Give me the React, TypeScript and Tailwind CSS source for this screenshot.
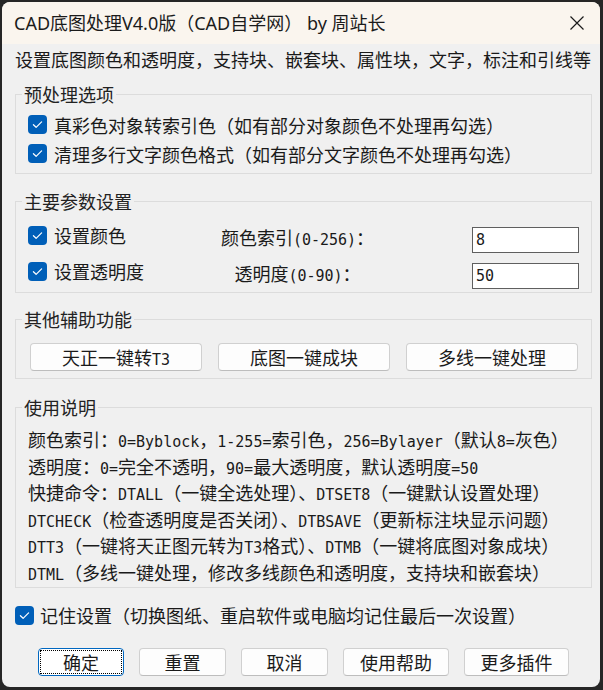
import React from "react";

function T({ s }: { s: string }) {
  const parts = s.split(/([\x20-\x7e]+)/);
  return (
    <>
      {parts.map((p, i) =>
        /^[\x20-\x7e]+$/.test(p) ? (
          <span key={i} className="font-['DejaVu_Sans_Mono',monospace] text-[15px] leading-none">
            {p}
          </span>
        ) : (
          <React.Fragment key={i}>{p}</React.Fragment>
        )
      )}
    </>
  );
}

function Check() {
  return (
    <span className="flex h-[19px] w-[19px] shrink-0 items-center justify-center rounded-[4px] bg-[#005fb8]">
      <svg width="19" height="19" viewBox="0 0 19 19">
        <path
          d="M5.4 9.7 L8.1 12.3 L13.6 6.8"
          fill="none"
          stroke="white"
          strokeWidth="1.2"
          strokeLinecap="round"
          strokeLinejoin="round"
        />
      </svg>
    </span>
  );
}

function Btn({ children, w }: { children: React.ReactNode; w: string }) {
  return (
    <button
      className={`flex h-[28px] items-center justify-center rounded-[4px] border border-[#d0d0d0] border-b-[#bdbdbd] bg-[#fdfdfd] text-[18px] text-[#1a1a1a] ${w}`}
    >
      <span className="block h-[24px] leading-[24px]">{children}</span>
    </button>
  );
}

function Line({ s }: { s: string }) {
  return (
    <div className="h-[26.6px] overflow-visible whitespace-nowrap leading-[26.6px]">
      <T s={s} />
    </div>
  );
}

export default function App() {
  return (
    <div className="h-[690px] w-[603px] bg-[#262626] pb-[3px] pl-[2px] pr-[3px] pt-[2px] font-['Noto_Sans_CJK_SC',sans-serif] text-[18px] text-[#1a1a1a]">
      <div className="flex h-full flex-col overflow-hidden rounded-[8px] bg-[#f0f0f0]">
        <div className="flex h-[42px] shrink-0 items-center justify-between bg-[#faf5ee] pl-[12px] pr-[15px]">
          <span className="font-['Noto_Sans','Noto_Sans_CJK_SC',sans-serif] text-[18px] leading-[24px] text-[#1b1b1b]">
            CAD底图处理V4.0版（CAD自学网） by 周站长
          </span>
          <svg width="16" height="16" viewBox="0 0 16 16">
            <path d="M1.5 1.5 L14.5 14.5 M14.5 1.5 L1.5 14.5" stroke="#1b1b1b" strokeWidth="1.2" fill="none" />
          </svg>
        </div>

        <div className="flex flex-col pl-[13px] pr-[8px]">
          <div className="h-[32px] leading-[30px]">
            设置底图颜色和透明度，支持块、嵌套块、属性块，文字，标注和引线等
          </div>

          {/* 预处理选项 */}
          <fieldset className="mt-[8px] min-w-0 border border-[#dcdcdc] pb-[5px] pt-[6px]">
            <legend className="ml-[6px] px-[2px] leading-[20px] text-[#222]">预处理选项</legend>
            <div className="flex h-[29px] items-center gap-[7px] pl-[12px]">
              <Check />
              <span className="leading-[20px]">真彩色对象转索引色（如有部分对象颜色不处理再勾选）</span>
            </div>
            <div className="flex h-[29px] items-center gap-[7px] pl-[12px]">
              <Check />
              <span className="leading-[20px]">清理多行文字颜色格式（如有部分文字颜色不处理再勾选）</span>
            </div>
          </fieldset>

          {/* 主要参数设置 */}
          <fieldset className="mt-[17px] flex min-w-0 flex-col gap-[10px] border border-[#dcdcdc] pb-[3px] pl-[12px] pr-[12px] pt-[16px]">
            <legend className="ml-[-6px] px-[2px] leading-[20px] text-[#222]">主要参数设置</legend>
            <div className="flex h-[26px] items-start">
              <div className="mt-[-1px] flex h-[19px] w-[172px] items-center gap-[7px]">
                <Check />
                <span className="leading-[19px]">设置颜色</span>
              </div>
              <div className="h-[20px] w-[195px] text-center leading-[20px]">
                <T s="颜色索引(0-256)：" />
              </div>
              <div className="ml-auto flex h-[26px] w-[107px] items-center border border-[#5f5f5f] bg-white pl-[3px] leading-none">
                <T s="8" />
              </div>
            </div>
            <div className="flex h-[26px] items-start">
              <div className="mt-[-1px] flex h-[19px] w-[172px] items-center gap-[7px]">
                <Check />
                <span className="leading-[19px]">设置透明度</span>
              </div>
              <div className="h-[20px] w-[195px] text-center leading-[20px]">
                <T s="透明度(0-90)：" />
              </div>
              <div className="ml-auto flex h-[26px] w-[107px] items-center border border-[#5f5f5f] bg-white pl-[3px] leading-none">
                <T s="50" />
              </div>
            </div>
          </fieldset>

          {/* 其他辅助功能 */}
          <fieldset className="mt-[16px] min-w-0 border border-[#dcdcdc] pb-[7px] pl-[14px] pr-[13px] pt-[14px]">
            <legend className="ml-[-8px] px-[2px] leading-[20px] text-[#222]">其他辅助功能</legend>
            <div className="grid grid-cols-3 gap-[16px]">
              <Btn w="w-full">
                <T s="天正一键转T3" />
              </Btn>
              <Btn w="w-full">底图一键成块</Btn>
              <Btn w="w-full">多线一键处理</Btn>
            </div>
          </fieldset>

          {/* 使用说明 */}
          <fieldset className="mt-[18px] min-w-0 border border-[#dcdcdc] pb-[1px] pl-[12px] pt-[9px]">
            <legend className="ml-[-6px] px-[2px] leading-[20px] text-[#222]">使用说明</legend>
            <Line s="颜色索引：0=Byblock，1-255=索引色，256=Bylayer（默认8=灰色）" />
            <Line s="透明度：0=完全不透明，90=最大透明度，默认透明度=50" />
            <Line s="快捷命令：DTALL（一键全选处理）、DTSET8（一键默认设置处理）" />
            <Line s="DTCHECK（检查透明度是否关闭）、DTBSAVE（更新标注块显示问题）" />
            <Line s="DTT3（一键将天正图元转为T3格式）、DTMB（一键将底图对象成块）" />
            <Line s="DTML（多线一键处理，修改多线颜色和透明度，支持块和嵌套块）" />
          </fieldset>

          <div className="mt-[18px] flex h-[19px] items-center gap-[6px]">
            <Check />
            <span className="leading-[20px]">记住设置（切换图纸、重启软件或电脑均记住最后一次设置）</span>
          </div>

          <div className="mt-[23px] flex gap-[15px] pl-[23px]">
            <button className="flex h-[28px] w-[86px] rounded-[4px] border border-[#0067c0] bg-white p-[1px] text-[18px]">
              <span className="flex flex-1 items-center justify-center border border-dotted border-black leading-[20px]">确定</span>
            </button>
            <Btn w="w-[87px]">重置</Btn>
            <Btn w="w-[87px]">取消</Btn>
            <Btn w="w-[106px]">使用帮助</Btn>
            <Btn w="w-[105px]">更多插件</Btn>
          </div>
        </div>
      </div>
    </div>
  );
}
